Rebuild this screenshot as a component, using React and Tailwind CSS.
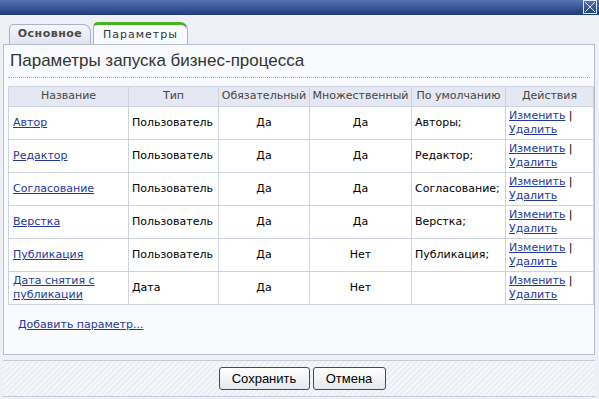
import React from 'react';

const rows = [
  { name: 'Автор', type: 'Пользователь', req: 'Да', multi: 'Да', def: 'Авторы;' },
  { name: 'Редактор', type: 'Пользователь', req: 'Да', multi: 'Да', def: 'Редактор;' },
  { name: 'Согласование', type: 'Пользователь', req: 'Да', multi: 'Да', def: 'Согласование;' },
  { name: 'Верстка', type: 'Пользователь', req: 'Да', multi: 'Да', def: 'Верстка;' },
  { name: 'Публикация', type: 'Пользователь', req: 'Да', multi: 'Нет', def: 'Публикация;' },
  { name: 'Дата снятия с публикации', type: 'Дата', req: 'Да', multi: 'Нет', def: '' },
];

const link = 'text-[#23399a] underline';

const App = () => {
  return (
    <div className="w-[599px] h-[399px] flex flex-col bg-[#eceef5] font-['DejaVu_Sans',sans-serif] text-[11px] text-black overflow-hidden">
      {/* title bar */}
      <div className="h-[15px] shrink-0 bg-gradient-to-b from-[#5573b4] to-[#1d3a7d] flex justify-end pr-[2px]">
        <svg width="14" height="14" viewBox="0 0 14 14">
          <rect x="0.5" y="0.5" width="13" height="13" fill="none" stroke="#dfe6f5" />
          <path d="M2 2 L12 12 M12 2 L2 12" stroke="#dfe6f5" strokeWidth="1" />
        </svg>
      </div>

      <div className="flex-1 flex flex-col px-[3px] pr-[4px] bg-[#eef0f6]">
        {/* tabs */}
        <div className="h-[29px] shrink-0 flex items-end pl-[6px] gap-[2px]">
          <div className="h-[20px] w-[82px] flex items-center justify-center border border-b-0 border-[#a9b1cc] rounded-tl-[5px] rounded-tr-[8px] bg-gradient-to-b from-[#f6f7fb] to-[#dfe3ef] text-[#4a4a4a] font-bold tracking-[0.5px]">
            Основное
          </div>
          <div className="h-[23px] w-[95px] -mb-[1px] flex items-center justify-center border border-b-0 border-[#a9b1cc] border-t-[3px] border-t-[#46b41e] rounded-tl-[5px] rounded-tr-[8px] bg-[#f9fafd] text-[#333] tracking-[1px]">
            Параметры
          </div>
        </div>

        {/* panel */}
        <div className="h-[311px] shrink-0 border border-[#b4bcd6] bg-[#f9fafd] px-[4px] flex flex-col">
          <div className="font-['Liberation_Sans',sans-serif] text-[17px] leading-[20px] text-[#333] pl-[2px] pt-[6px] pb-[6px] border-b border-dotted border-[#b0b0b0]">
            Параметры запуска бизнес-процесса
          </div>
          <table className="mt-[8px] table-fixed border-collapse border border-[#cdd2e3] w-[585px]">
            <colgroup>
              <col className="w-[120px]" />
              <col className="w-[90px]" />
              <col className="w-[91px]" />
              <col className="w-[102px]" />
              <col className="w-[94px]" />
              <col className="w-[88px]" />
            </colgroup>
            <thead>
              <tr className="h-[20px] bg-[#e5e8f3] text-[#444]">
                {['Название', 'Тип', 'Обязательный', 'Множественный', 'По умолчанию', 'Действия'].map((h) => (
                  <th key={h} className="font-normal border border-[#cdd2e3] px-[2px] whitespace-nowrap">{h}</th>
                ))}
              </tr>
            </thead>
            <tbody className="bg-white font-normal">
              {rows.map((r) => (
                <tr key={r.name} className="h-[33px]">
                  <td className="border border-[#cdd2e3] px-[4px] leading-[14px]">
                    <a className={link}>{r.name}</a>
                  </td>
                  <td className="border border-[#cdd2e3] px-[3px]">{r.type}</td>
                  <td className="border border-[#cdd2e3] text-center">{r.req}</td>
                  <td className="border border-[#cdd2e3] text-center">{r.multi}</td>
                  <td className="border border-[#cdd2e3] px-[3px]">{r.def}</td>
                  <td className="border border-[#cdd2e3] px-[3px] leading-[14px]">
                    <a className={link}>Изменить</a> |<br />
                    <a className={link}>Удалить</a>
                  </td>
                </tr>
              ))}
            </tbody>
          </table>
          <div className="pl-[10px] pt-[12px]">
            <a className={link}>Добавить параметр...</a>
          </div>
        </div>

        {/* buttons */}
        <div className="flex-1 mt-[5px] mb-[2px] border-t border-b border-[#c5cadc] bg-[repeating-linear-gradient(135deg,#eceef5_0px,#eceef5_2px,#f6f7fb_2px,#f6f7fb_4px)] flex justify-center items-start pt-[6px] gap-[3px] font-['Liberation_Sans',sans-serif] text-[13px]">
          <button className="w-[91px] h-[23px] ml-[6px] border border-[#3e4a66] rounded-[3px] bg-gradient-to-b from-white to-[#e6e8ef] text-black">
            Сохранить
          </button>
          <button className="w-[73px] h-[23px] border border-[#3e4a66] rounded-[3px] bg-gradient-to-b from-white to-[#e6e8ef] text-black">
            Отмена
          </button>
        </div>
      </div>
    </div>
  );
};

export default App;
